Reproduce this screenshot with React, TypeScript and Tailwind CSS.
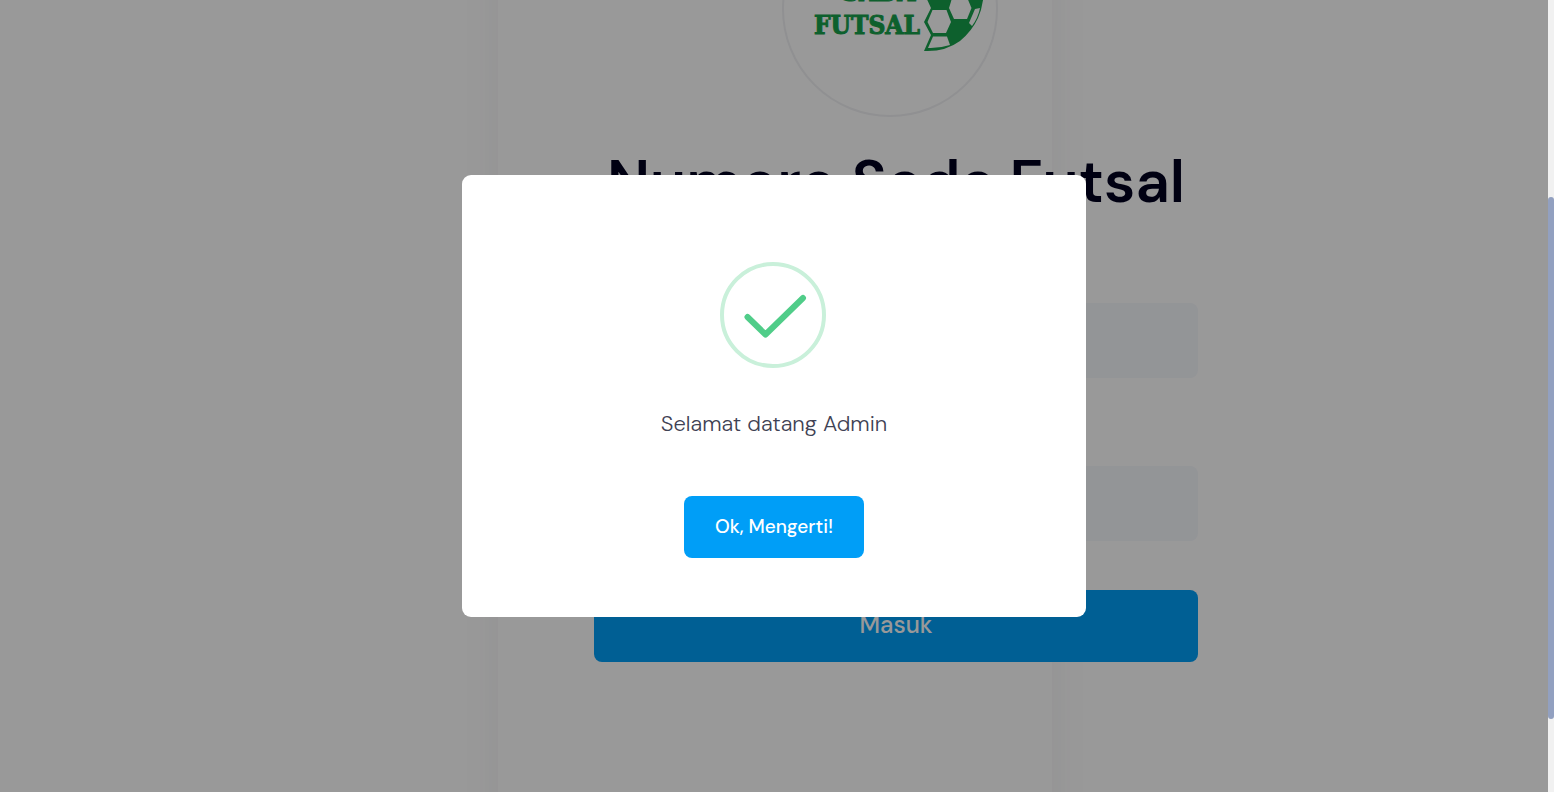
import React from "react";

function Logo() {
  return (
    <svg viewBox="0 0 216 216" className="ml-[188px] size-[216px]" role="img" aria-label="Sada Futsal">
      <circle cx="108" cy="108" r="107" fill="#fff" stroke="#f0f1f3" strokeWidth="2" />
      <g
        fill="#17a04b"
        stroke="#17a04b"
        strokeWidth="1"
        fontFamily="'DejaVu Serif Condensed', 'DejaVu Serif', serif"
        fontWeight="700"
        fontSize="26"
      >
        <text x="60" y="100">SADA</text>
        <text x="32" y="133">FUTSAL</text>
      </g>
      <path
        d="M202 84 Q202 104 196 117 Q190 130 178 140 Q163 151 142 150 L149 134 L142 121 L149 107 L143 94 L146 84 Z"
        fill="#17a04b"
      />
      <path d="M150.500 109 L164.500 109 L169 121 L164 132 L151 132 L145.500 121 Z" fill="#fff" />
      <path d="M171 94 L184 94 L189.500 107 L185 118 L172 118 L167 107 Z" fill="#fff" />
      <path d="M193 108 L198 107 Q196 117 190 125 L187 122 Z" fill="#fff" />
      <path d="M151 135.500 L165 135.500 L168 144 Q157 147.500 146 147 Z" fill="#fff" />
    </svg>
  );
}

function Field({ id, label, type }: { id: string; label: string; type: string }) {
  return (
    <div className="mb-12 flex flex-col">
      <label htmlFor={id} className="mb-3 h-7 text-xl leading-7 text-[#0c0c2b]">
        {label}
      </label>
      <input id={id} type={type} className="h-[75px] w-full rounded-lg bg-[#f5f8fc] px-6 text-xl outline-none" />
    </div>
  );
}

function SignIn() {
  return (
    <main className="mx-auto min-h-[1000px] w-[554px] bg-white px-24 shadow-[0_0_40px_rgba(82,63,105,0.06)]">
      <form className="-mt-[99px] w-[604px]" onSubmit={(e) => e.preventDefault()}>
        <Logo />
        <h1 className="mt-7 mb-11 text-center text-[60px] leading-[74px] font-semibold whitespace-nowrap text-[#00001f]">
          Numero Sada Futsal
        </h1>
        <Field id="username" label="Username" type="text" />
        <Field id="password" label="Password" type="password" />
        <button
          type="submit"
          className="mt-px h-[72px] w-full rounded-lg bg-[#009ef7] pb-0.5 text-2xl font-medium text-white"
        >
          Masuk
        </button>
      </form>
    </main>
  );
}

function WelcomeDialog() {
  return (
    <div className="absolute inset-0 flex items-center justify-center bg-black/40">
      <div
        role="dialog"
        aria-modal="true"
        aria-labelledby="welcome-message"
        className="flex w-[624px] flex-col items-center rounded-[9px] bg-white pt-[87px] pb-[59px]"
      >
        <svg viewBox="0 0 106 106" className="mr-[2px] size-[106px]" fill="none" aria-hidden="true">
          <circle cx="53" cy="53" r="51" stroke="#c9f0da" strokeWidth="4" />
          <path d="M27.500 55 L45.500 72.500 L83 36" stroke="#50cd89" strokeWidth="6" strokeLinecap="round" strokeLinejoin="round" />
        </svg>
        <p id="welcome-message" className="mt-10 text-[22px] leading-8 font-light text-[#3f4254]">
          Selamat datang Admin
        </p>
        <button
          type="button"
          className="mt-14 h-[62px] w-[180px] rounded-lg bg-[#009ef7] text-[19px] font-medium text-white"
        >
          Ok, Mengerti!
        </button>
      </div>
    </div>
  );
}

export default function App() {
  return (
    <div className="flex h-screen overflow-hidden bg-white font-['DM_Sans','Open_Sans',sans-serif]">
      <div className="relative min-w-0 flex-1 overflow-hidden pl-0.5">
        <SignIn />
        <WelcomeDialog />
      </div>
      <div className="w-[6px] shrink-0 bg-[#f1f1f1] pt-[197px]">
        <div className="h-[522px] rounded-full bg-[#92a0c0]" />
      </div>
    </div>
  );
}
